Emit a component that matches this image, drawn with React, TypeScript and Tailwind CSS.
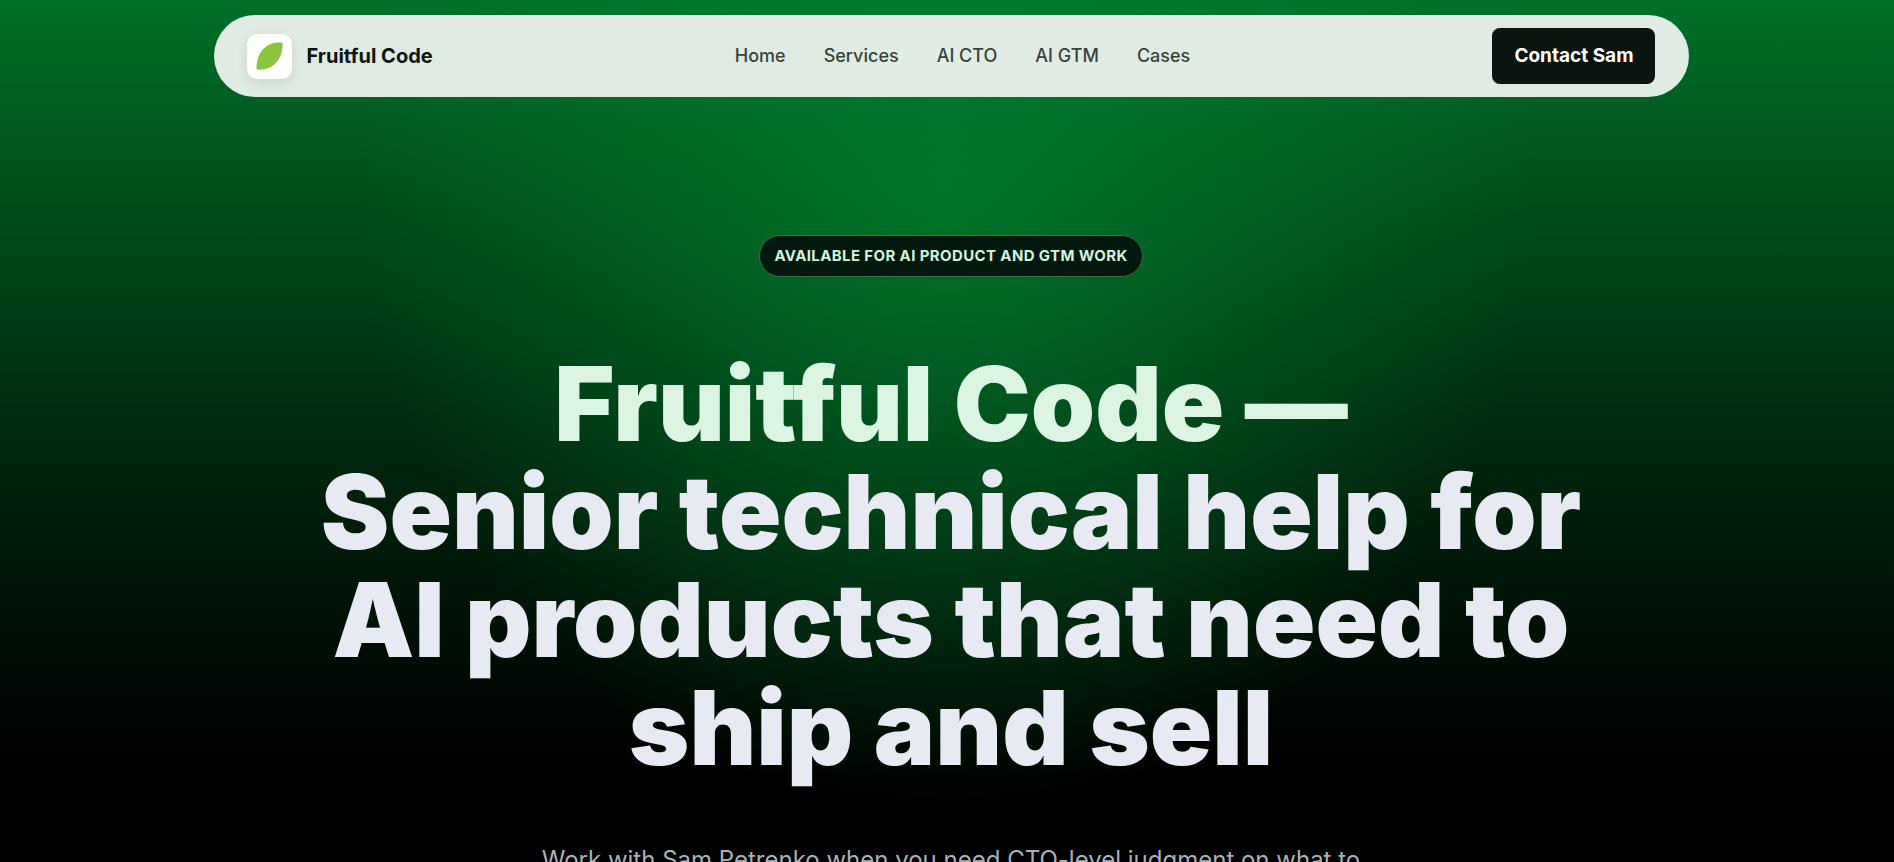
const links = ['Home', 'Services', 'AI CTO', 'AI GTM', 'Cases'];

function Logo() {
  return (
    <a href="#" className="flex items-center gap-[15px] text-xl font-bold text-[#0b140f] [font-variant-ligatures:none]">
      <span className="flex size-[45px] items-center justify-center rounded-[10px] bg-white shadow-[0_4px_12px_rgba(11,20,15,0.1)]">
        <svg viewBox="0 0 27 28" className="h-7 w-[27px]" fill="#8bc53f" aria-hidden="true">
          <path d="M26.500.6C9.800-1 0 10.800.5 27.500 17 29 27.500 17 26.500.6Z" />
        </svg>
      </span>
      Fruitful Code
    </a>
  );
}

export default function App() {
  return (
    <div className="min-h-screen bg-black bg-[radial-gradient(590px_630px_at_50%_185px,rgba(0,132,48,0.72),rgba(0,132,48,0)),linear-gradient(180deg,#007029_0px,#005c21_115px,#004017_290px,#002b0f_420px,#001a09_550px,#000b04_670px,#000000_780px)] pl-2 font-['Inter',sans-serif]">
      <header className="mx-auto w-full max-w-[1475px] pt-[15px]">
        <div className="flex h-[82px] items-center justify-between rounded-full bg-[#e4efe8]/98 px-[33px]">
          <Logo />
          <nav className="flex gap-[38px] text-lg font-medium text-[#36443b]">
            {links.map((l) => (
              <a key={l} href="#">{l}</a>
            ))}
          </nav>
          <button className="h-14 rounded-lg bg-[#0b140f] px-[22px] text-[19px] font-bold text-white">
            Contact Sam
          </button>
        </div>
      </header>
      <main className="flex flex-col items-center text-center">
        <p className="mt-[138px] flex h-[42px] items-center rounded-full border border-[#3f6a4d] bg-[#04190d] px-3.5 text-[15px] font-bold tracking-wide text-[#d3f3de]">
          AVAILABLE FOR AI PRODUCT AND GTM WORK
        </p>
        <h1 className="mt-[73px] whitespace-nowrap text-[103px] leading-[108px] font-black text-[#e8eaf3] [font-variant-ligatures:none]">
          <span className="block text-[#dcf5e3]">Fruitful Code —</span>
          <span className="block">Senior technical help for</span>
          <span className="block">AI products that need to</span>
          <span className="block">ship and sell</span>
        </h1>
        <p className="mt-[62px] whitespace-nowrap text-2xl text-[#a9b1b8]">
          Work with Sam Petrenko when you need CTO-level judgment on what to
        </p>
      </main>
    </div>
  );
}
